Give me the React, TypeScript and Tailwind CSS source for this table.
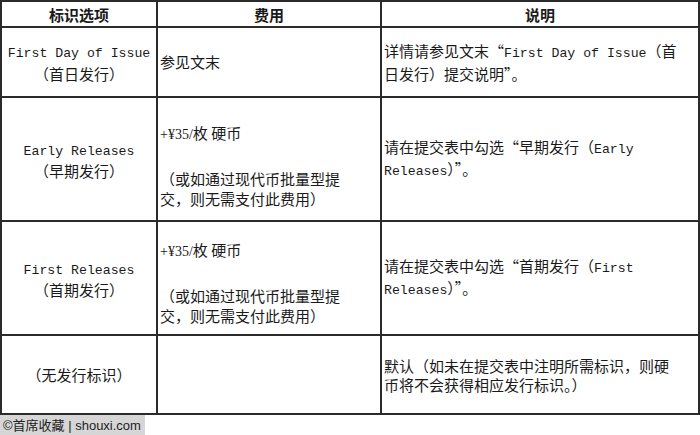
import React from "react";

const M = ({ children }: { children: React.ReactNode }) => (
  <span className="font-['Liberation_Mono',monospace] text-[13.2px]">{children}</span>
);
const S = ({ children }: { children: React.ReactNode }) => (
  <span className="font-['Liberation_Serif',serif] text-[14px]">{children}</span>
);

const cell = "border-r-2 border-b-2 border-[#2b2b2b]";

export default function App() {
  return (
    <div className="w-[700px] h-[435px] bg-white text-[#1a1a1a] font-['Noto_Sans_CJK_SC','Liberation_Sans',sans-serif] text-[15px]">
      <div className="grid grid-cols-[158px_224px_318px] grid-rows-[28px_70px_124px_114px_79px]">
        {/* header */}
        <div className={`${cell} border-l-2 border-t-2 flex items-center justify-center font-bold leading-none`}>标识选项</div>
        <div className={`${cell} border-t-2 flex items-center justify-center font-bold leading-none`}>费用</div>
        <div className={`${cell} border-t-2 flex items-center justify-center font-bold leading-none`}>说明</div>

        {/* row 1 */}
        <div className={`${cell} border-l-2 flex flex-col items-center justify-center leading-[20px] text-center`}>
          <div><M>First Day of Issue</M></div>
          <div>（首日发行）</div>
        </div>
        <div className={`${cell} flex items-center pl-[2px] leading-[20px]`}>参见文末</div>
        <div className={`${cell} flex flex-col justify-center pl-[2px] leading-[20px] whitespace-nowrap`}>
          <div>详情请参见文末“<M>First Day of Issue</M>（首</div>
          <div>日发行）提交说明”。</div>
        </div>

        {/* row 2 */}
        <div className={`${cell} border-l-2 flex flex-col items-center justify-center leading-[19px] text-center`}>
          <div><M>Early Releases</M></div>
          <div>（早期发行）</div>
        </div>
        <div className={`${cell} flex flex-col pl-[2px] pt-[25px] leading-[20px] whitespace-nowrap`}>
          <div><S>+¥35/</S>枚 硬币</div>
          <div className="h-[24px]"></div>
          <div>（或如通过现代币批量型提</div>
          <div>交，则无需支付此费用）</div>
        </div>
        <div className={`${cell} flex flex-col justify-center pl-[2px] leading-[19px] whitespace-nowrap`}>
          <div>请在提交表中勾选“早期发行（<M>Early</M></div>
          <div><M>Releases</M>）”。</div>
        </div>

        {/* row 3 */}
        <div className={`${cell} border-l-2 flex flex-col items-center justify-center leading-[19px] text-center`}>
          <div><M>First Releases</M></div>
          <div>（首期发行）</div>
        </div>
        <div className={`${cell} flex flex-col pl-[2px] pt-[18px] leading-[20px] whitespace-nowrap`}>
          <div><S>+¥35/</S>枚 硬币</div>
          <div className="h-[24px]"></div>
          <div>（或如通过现代币批量型提</div>
          <div>交，则无需支付此费用）</div>
        </div>
        <div className={`${cell} flex flex-col justify-center pl-[2px] leading-[19px] whitespace-nowrap`}>
          <div>请在提交表中勾选“首期发行（<M>First</M></div>
          <div><M>Releases</M>）”。</div>
        </div>

        {/* row 4 */}
        <div className={`${cell} border-l-2 flex items-center justify-center leading-[20px]`}>（无发行标识）</div>
        <div className={cell}></div>
        <div className={`${cell} flex flex-col justify-center pl-[2px] leading-[19px] whitespace-nowrap`}>
          <div>默认（如未在提交表中注明所需标识，则硬</div>
          <div>币将不会获得相应发行标识。）</div>
        </div>
      </div>
      <div className="w-[145px] h-[20px] bg-[#d6d6d6] flex items-center pl-[3px] text-[13px] leading-none text-[#222] whitespace-nowrap font-['Liberation_Sans','Noto_Sans_CJK_SC',sans-serif]">
        ©首席收藏 | shouxi.com
      </div>
    </div>
  );
}
